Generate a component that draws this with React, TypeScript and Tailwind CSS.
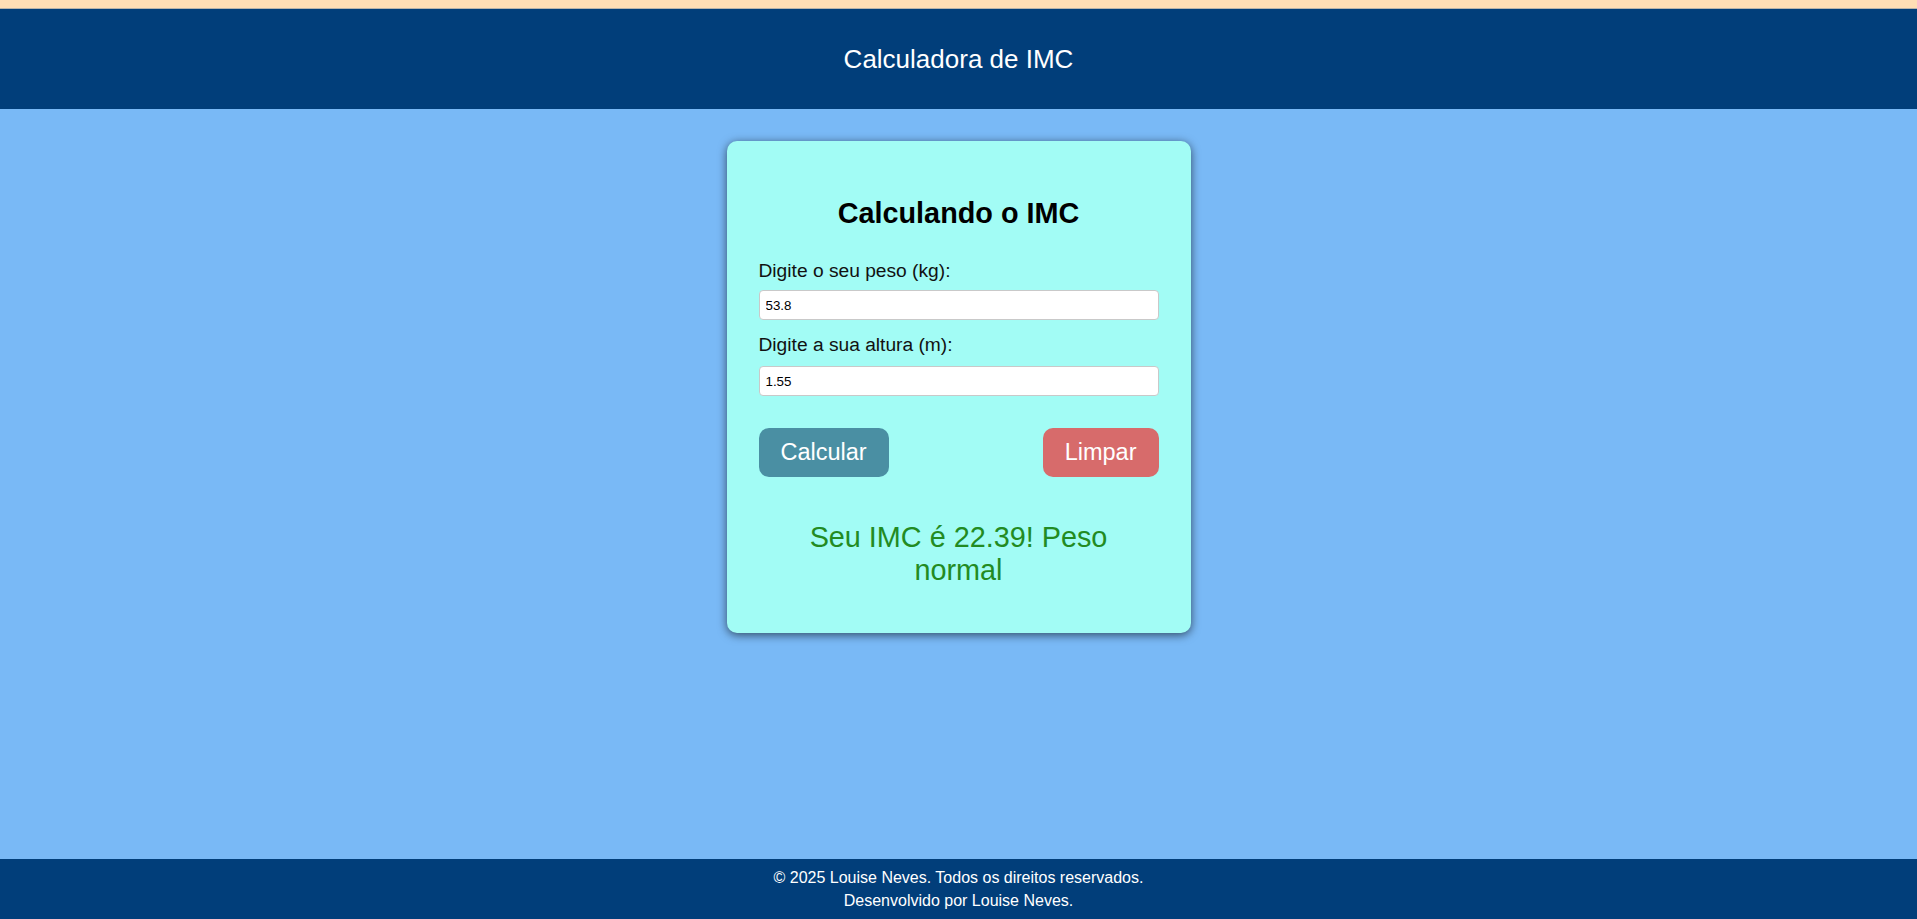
import React from "react";

export default function App() {
  return (
    <div className="min-h-screen flex flex-col bg-[#79b9f6] font-['Liberation_Sans',Arial,sans-serif]">
      <div className="h-[9px] bg-[#ffdeb5] border-b border-[#b8b3aa]" />
      <header className="h-[100px] bg-[#013e7a] flex items-center justify-center">
        <h1 className="text-[26px] leading-[30px] text-white">Calculadora de IMC</h1>
      </header>
      <main className="flex-1 pt-8">
        <div className="w-[464px] mx-auto bg-[#a2fcf5] rounded-[10px] shadow-[0_2px_10px_rgba(0,0,0,0.6)] px-8 pt-8 pb-[46px]">
          <h2 className="mt-6 text-[28.8px] leading-[33px] font-bold text-center text-black">
            Calculando o IMC
          </h2>
          <label className="block mt-[30px] text-[19.2px] leading-[22px] text-[#111]">
            Digite o seu peso (kg):
          </label>
          <input
            type="text"
            defaultValue="53.8"
            className="block w-full mt-2 h-[30px] border border-[#c9c9c9] rounded-[4px] bg-white px-[6px] text-[13.33px] text-black outline-none"
          />
          <label className="block mt-[14px] text-[19.2px] leading-[22px] text-[#111]">
            Digite a sua altura (m):
          </label>
          <input
            type="text"
            defaultValue="1.55"
            className="block w-full mt-[10px] h-[30px] border border-[#c9c9c9] rounded-[4px] bg-white px-[6px] text-[13.33px] text-black outline-none"
          />
          <div className="mt-8 flex justify-between">
            <button className="h-[49px] px-[22px] rounded-[10px] bg-[#4a8fa3] text-white text-[23.5px] leading-[27px]">
              Calcular
            </button>
            <button className="h-[49px] px-[22px] rounded-[10px] bg-[#d76b6b] text-white text-[23.5px] leading-[27px]">
              Limpar
            </button>
          </div>
          <p className="mt-[44px] text-center text-[28.8px] leading-[33px] text-[#228b22] px-[20px]">
            Seu IMC é 22.39! Peso normal
          </p>
        </div>
      </main>
      <footer className="bg-[#013e7a] text-white text-center pt-2 pb-[7px] text-[16px] leading-[22.4px]">
        <p>© 2025 Louise Neves. Todos os direitos reservados.</p>
        <p>Desenvolvido por Louise Neves.</p>
      </footer>
    </div>
  );
}
